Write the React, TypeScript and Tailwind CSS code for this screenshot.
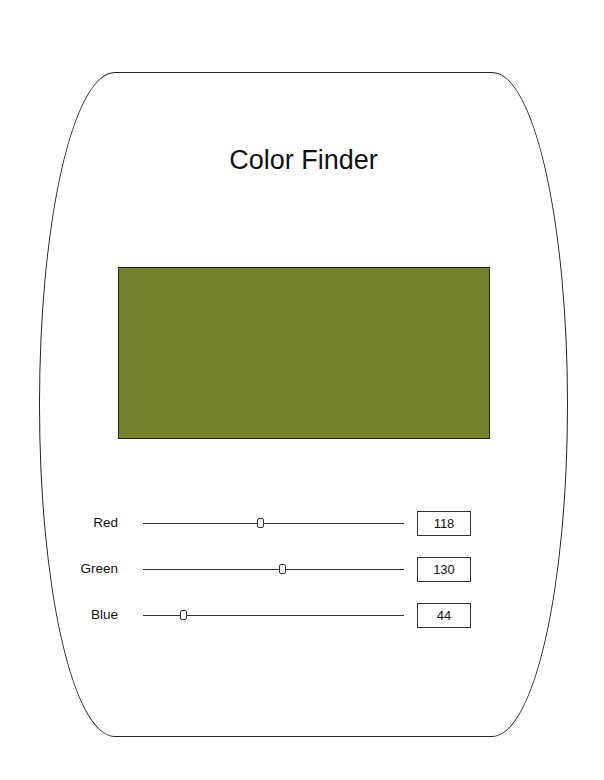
import React, { useState } from 'react';

type Channel = {
  label: string;
  value: number;
  // thumb offset along the track, in px
  pos: number;
};

const TRACK_WIDTH = 261;

const App: React.FC = () => {
  const [channels] = useState<Channel[]>([
    { label: 'Red', value: 118, pos: 117 },
    { label: 'Green', value: 130, pos: 139 },
    { label: 'Blue', value: 44, pos: 40 },
  ]);

  const [r, g, b] = channels.map((c) => c.value);

  return (
    <div
      className="w-[604px] h-[780px] bg-white overflow-hidden"
      style={{ fontFamily: '"Liberation Sans", Arial, sans-serif' }}
    >
      {/* Card */}
      <div className="ml-[39px] mt-[72px] w-[529px] h-[665px] border border-[#222] rounded-[76px/332px] flex flex-col items-center pt-[72px]">
        <h1 className="text-[27px] leading-[30px] text-[#111] font-normal">Color Finder</h1>

        {/* Preview swatch */}
        <div
          className="mt-[92px] w-[372px] h-[172px] border border-[#222]"
          style={{ backgroundColor: `rgb(${r}, ${g}, ${b})` }}
        />

        {/* Sliders */}
        <div className="mt-[72px] self-start flex flex-col gap-[21px]">
          {channels.map((c) => (
            <div key={c.label} className="flex items-center h-[25px]">
              <span className="w-[78px] text-right text-[13.5px] text-[#111]">{c.label}</span>
              <div className="relative ml-[25px] h-[25px] flex items-center" style={{ width: TRACK_WIDTH }}>
                <div className="w-full h-px bg-[#333]" />
                <div
                  className="absolute top-[7px] w-[7px] h-[10px] bg-white border border-[#333] rounded-[2px]"
                  style={{ left: c.pos - 3 }}
                />
              </div>
              <div className="ml-[13px] w-[54px] h-[25px] border border-[#333] flex items-center justify-center text-[13px] text-[#111]">
                {c.value}
              </div>
            </div>
          ))}
        </div>
      </div>
    </div>
  );
};

export default App;
